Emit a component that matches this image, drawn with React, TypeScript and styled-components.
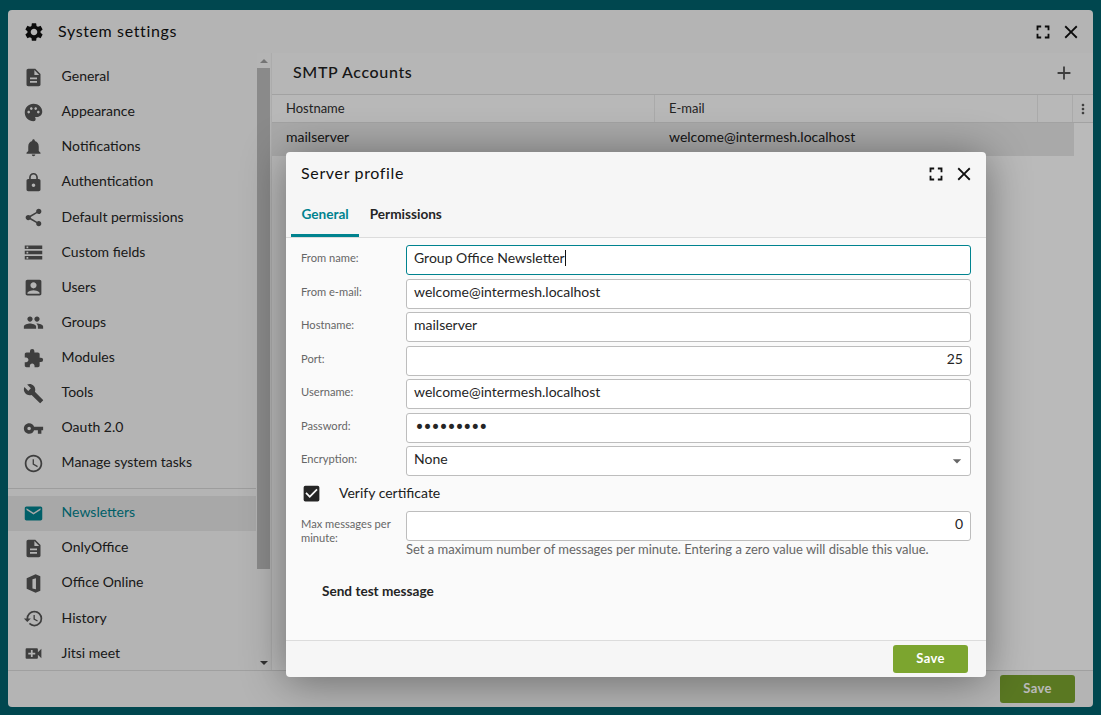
import styled, { createGlobalStyle } from "styled-components";
import {
  MdAccessTime,
  MdAccountBox,
  MdAdd,
  MdArrowDropDown,
  MdBuild,
  MdCheckBox,
  MdClose,
  MdDescription,
  MdEmail,
  MdExtension,
  MdFullscreen,
  MdHistory,
  MdLock,
  MdMoreVert,
  MdNotifications,
  MdPalette,
  MdPeople,
  MdSettings,
  MdShare,
  MdStorage,
  MdVideoCall,
  MdVpnKey,
} from "react-icons/md";

const GlobalStyle = createGlobalStyle`
  html, body {
    margin: 0;
    height: 100%;
    background: #00626d;
    font-family: Lato, "Liberation Sans", sans-serif;
    color: #202020;
    overflow: hidden;
  }
  #root {
    height: 100%;
  }
`;

const Desktop = styled.div`
  position: relative;
  box-sizing: border-box;
  height: 715px;
  padding: 10px 8px 8px;
`;

const Window = styled.div`
  display: flex;
  flex-direction: column;
  height: 100%;
  border-radius: 4px;
  background: #f7f7f7;
  overflow: hidden;
`;

const TitleBar = styled.div`
  display: flex;
  align-items: center;
  flex: none;
  height: 43px;
  padding: 0 8px 0 15px;
`;

const Title = styled.div`
  flex: 1;
  margin: 0 0 2px 13px;
  font-size: 16px;
  letter-spacing: 0.63px;
  color: #111;
`;

const HeadButton = styled.div`
  display: flex;
  align-items: center;
  justify-content: center;
  width: 28px;
  height: 28px;
  color: #111;
`;

const Body = styled.div`
  display: flex;
  flex: 1;
  min-height: 0;
`;

const Sidebar = styled.div`
  flex: none;
  width: 248px;
  padding-top: 6px;
  overflow: hidden;
`;

const NavRow = styled.div<{ $active?: boolean }>`
  display: flex;
  align-items: center;
  box-sizing: border-box;
  height: 35.13px;
  padding: 0 0 2px 15px;
  font-size: 14px;
  color: ${(p) => (p.$active ? "#00838f" : "#252525")};
  background: ${(p) => (p.$active ? "#e6e6e6" : "transparent")};

  svg {
    flex: none;
    margin-bottom: -3px;
    color: ${(p) => (p.$active ? "#00838f" : "#555")};
  }
`;

const ModuleGroup = styled.div`
  ${NavRow} {
    padding-bottom: 3.6px;
  }
`;

const NavIcon = styled.span`
  display: flex;
  align-items: center;
  justify-content: center;
  width: 21px;
  margin-right: 17.6px;
`;

const NavDivider = styled.div`
  height: 1px;
  margin: 7.2px 0;
  background: #d8d8d8;
`;

const Scrollbar = styled.div`
  display: flex;
  flex-direction: column;
  flex: none;
  width: 13px;
  margin: 0 1px;
  background: #f8f8f8;
`;

const ScrollArrow = styled.div<{ $down?: boolean }>`
  flex: none;
  width: 0;
  height: 0;
  margin: 6px auto 5px;
  border-left: 4px solid transparent;
  border-right: 4px solid transparent;
  border-${(p) => (p.$down ? "top" : "bottom")}: 4px solid ${(p) => (p.$down ? "#444" : "#a0a0a0")};
`;

const ScrollThumb = styled.div`
  flex: none;
  height: 501px;
  background: #bdbdbd;
`;

const ScrollRest = styled.div`
  flex: 1;
  display: flex;
  align-items: flex-end;
`;

const Panel = styled.div`
  flex: 1;
  min-width: 0;
  background: #ffffff;
  border-left: 1px solid #ececec;
`;

const PanelBar = styled.div`
  display: flex;
  align-items: center;
  justify-content: space-between;
  box-sizing: border-box;
  height: 42px;
  padding: 0 18px 4px 21px;
  background: #fafafa;
  border-bottom: 1px solid #dedede;
  font-size: 16px;
  font-weight: 500;
  letter-spacing: 0.63px;

  svg {
    margin-bottom: -2px;
    color: #555;
  }
`;

const HeadRow = styled.div`
  display: grid;
  grid-template-columns: 383px 383px 35px 1fr;
  box-sizing: border-box;
  height: 28px;
  background: #fdfdfd;
  border-bottom: 1px solid #dedede;
  font-size: 13px;
`;

const HeadCell = styled.div`
  display: flex;
  align-items: center;
  padding: 0 0 2px 14px;
  border-right: 1px solid #eaeaea;
  color: #303030;

  &:last-child {
    justify-content: center;
    padding: 0;
    border: 0;
    color: #555;
  }
`;

const DataRow = styled.div`
  display: grid;
  grid-template-columns: 383px 1fr;
  width: 802px;
  height: 33px;
  background: #e8e8e8;
  font-size: 14px;
`;

const DataCell = styled.div`
  display: flex;
  align-items: center;
  padding: 0 0 6px 14px;
`;

const Footer = styled.div`
  display: flex;
  justify-content: flex-end;
  align-items: center;
  flex: none;
  box-sizing: border-box;
  height: 37px;
  padding: 0 18px 0 0;
  border-top: 1px solid #dcdcdc;
`;

const SaveButton = styled.div`
  display: flex;
  align-items: center;
  justify-content: center;
  box-sizing: border-box;
  width: 75px;
  height: 28px;
  padding-bottom: 3px;
  border-radius: 3px;
  background: #7ca52f;
  color: #fff;
  font-size: 13px;
  font-weight: 700;
  letter-spacing: 0.3px;
`;

const Dim = styled.div`
  position: absolute;
  inset: 0;
  background: rgba(0, 0, 0, 0.27);
`;

const Dialog = styled.div`
  position: absolute;
  left: 286px;
  top: 152px;
  display: flex;
  flex-direction: column;
  width: 700px;
  height: 525px;
  border-radius: 4px;
  background: #f6f6f6;
  box-shadow: 0 4px 44px rgba(0, 0, 0, 0.42);
  overflow: hidden;
`;

const DialogHead = styled.div`
  display: flex;
  align-items: center;
  flex: none;
  height: 43px;
  padding: 0 8px 0 15px;
`;

const DialogTitle = styled.div`
  flex: 1;
  margin-bottom: 2px;
  font-size: 16px;
  letter-spacing: 0.65px;
  color: #111;
`;

const Tabs = styled.div`
  display: flex;
  flex: none;
  box-sizing: border-box;
  height: 43px;
  padding-left: 5px;
  border-bottom: 1px solid #dcdcdc;
`;

const Tab = styled.div<{ $active?: boolean }>`
  display: flex;
  align-items: center;
  padding: 0 10.5px 1px;
  font-size: 13.6px;
  font-weight: 700;
  color: ${(p) => (p.$active ? "#00838f" : "#252525")};
  border-bottom: 3px solid ${(p) => (p.$active ? "#00838f" : "transparent")};
`;

const Form = styled.div`
  display: flex;
  flex-direction: column;
  flex: 1;
  min-height: 0;
  padding: 7px 15px 0;
  background: #fafafa;
`;

const FieldRow = styled.div`
  display: flex;
  align-items: center;
  height: 33.5px;
  flex: none;
`;

const FieldLabel = styled.div`
  flex: none;
  width: 105px;
  padding-bottom: 7px;
  font-size: 11.15px;
  line-height: 14px;
  color: #666;
`;

const FieldBox = styled.div<{ $focus?: boolean; $right?: boolean }>`
  display: flex;
  align-items: center;
  justify-content: ${(p) => (p.$right ? "flex-end" : "flex-start")};
  flex: 1;
  box-sizing: border-box;
  height: 30px;
  margin-bottom: 3.5px;
  padding: 0 7px 5px;
  border: 1px solid ${(p) => (p.$focus ? "#00838f" : "#bdbdbd")};
  border-radius: 3px;
  background: #fff;
  font-size: 14px;
  color: #252525;
`;

const Caret = styled.span`
  width: 1px;
  height: 16px;
  background: #111;
`;

const Dots = styled.span`
  margin: 3px 0 0 0.5px;
  font-size: 17px;
  letter-spacing: -2.05px;
  font-family: "DejaVu Sans", sans-serif;
`;

const SelectValue = styled.span`
  flex: 1;
`;

const SelectArrow = styled.span`
  display: flex;
  margin: 0 -4px -5px 0;
  color: #666;
`;

const CheckRow = styled.div`
  display: flex;
  align-items: center;
  flex: none;
  box-sizing: border-box;
  height: 31.5px;
  padding-bottom: 5px;
  font-size: 14px;

  svg {
    flex: none;
    margin: 1px 17px 0 0;
    color: #252525;
  }
`;

const MaxRow = styled.div`
  display: flex;
  flex: none;
  height: 30px;
`;

const MaxLabel = styled(FieldLabel)`
  padding: 6px 0 0;
`;

const Hint = styled.div`
  flex: none;
  margin-left: 105px;
  font-size: 13px;
  line-height: 16px;
  color: #666;
`;

const TestButton = styled.div`
  flex: none;
  margin: 26px 0 0 21px;
  font-size: 13.6px;
  font-weight: 700;
  color: #252525;
`;

const DialogFooter = styled.div`
  display: flex;
  justify-content: flex-end;
  align-items: center;
  flex: none;
  box-sizing: border-box;
  height: 37px;
  padding: 0 18px 0 0;
  border-top: 1px solid #dcdcdc;
`;

const OfficeIcon = () => (
  <svg width="21" height="21" viewBox="0 0 24 24" fill="currentColor">
    <path
      fillRule="evenodd"
      d="M4.2 6 14.4 1.4 19.8 3.6v16.8L14.4 22.6 4.2 18ZM10.8 7.2 14.8 6v12.6l-4-1Z"
    />
  </svg>
);

const topNav = [
  { icon: <MdDescription size={21} />, label: "General" },
  { icon: <MdPalette size={21} />, label: "Appearance" },
  { icon: <MdNotifications size={21} />, label: "Notifications" },
  { icon: <MdLock size={21} />, label: "Authentication" },
  { icon: <MdShare size={21} />, label: "Default permissions" },
  { icon: <MdStorage size={21} />, label: "Custom fields" },
  { icon: <MdAccountBox size={21} />, label: "Users" },
  { icon: <MdPeople size={21} />, label: "Groups" },
  { icon: <MdExtension size={21} />, label: "Modules" },
  { icon: <MdBuild size={21} />, label: "Tools" },
  { icon: <MdVpnKey size={21} />, label: "Oauth 2.0" },
  { icon: <MdAccessTime size={21} />, label: "Manage system tasks" },
];

const moduleNav = [
  { icon: <MdEmail size={21} />, label: "Newsletters", active: true },
  { icon: <MdDescription size={21} />, label: "OnlyOffice" },
  { icon: <OfficeIcon />, label: "Office Online" },
  { icon: <MdHistory size={21} />, label: "History" },
  { icon: <MdVideoCall size={21} />, label: "Jitsi meet" },
];

const fields = [
  { label: "From e-mail:", value: "welcome@intermesh.localhost" },
  { label: "Hostname:", value: "mailserver" },
  { label: "Port:", value: "25", right: true },
  { label: "Username:", value: "welcome@intermesh.localhost" },
];

export default function App() {
  return (
    <Desktop>
      <GlobalStyle />
      <Window>
        <TitleBar>
          <MdSettings size={22} color="#111" />
          <Title>System settings</Title>
          <HeadButton>
            <MdFullscreen size={22} />
          </HeadButton>
          <HeadButton>
            <MdClose size={22} />
          </HeadButton>
        </TitleBar>
        <Body>
          <Sidebar>
            {topNav.map((item) => (
              <NavRow key={item.label}>
                <NavIcon>{item.icon}</NavIcon>
                {item.label}
              </NavRow>
            ))}
            <NavDivider />
            <ModuleGroup>
              {moduleNav.map((item) => (
                <NavRow key={item.label} $active={item.active}>
                  <NavIcon>{item.icon}</NavIcon>
                  {item.label}
                </NavRow>
              ))}
            </ModuleGroup>
          </Sidebar>
          <Scrollbar>
            <ScrollArrow />
            <ScrollThumb />
            <ScrollRest>
              <ScrollArrow $down />
            </ScrollRest>
          </Scrollbar>
          <Panel>
            <PanelBar>
              SMTP Accounts
              <MdAdd size={22} />
            </PanelBar>
            <HeadRow>
              <HeadCell>Hostname</HeadCell>
              <HeadCell>E-mail</HeadCell>
              <HeadCell />
              <HeadCell>
                <MdMoreVert size={16} />
              </HeadCell>
            </HeadRow>
            <DataRow>
              <DataCell>mailserver</DataCell>
              <DataCell>welcome@intermesh.localhost</DataCell>
            </DataRow>
          </Panel>
        </Body>
        <Footer>
          <SaveButton>Save</SaveButton>
        </Footer>
      </Window>
      <Dim />
      <Dialog>
        <DialogHead>
          <DialogTitle>Server profile</DialogTitle>
          <HeadButton>
            <MdFullscreen size={22} />
          </HeadButton>
          <HeadButton>
            <MdClose size={22} />
          </HeadButton>
        </DialogHead>
        <Tabs>
          <Tab $active>General</Tab>
          <Tab>Permissions</Tab>
        </Tabs>
        <Form>
          <FieldRow>
            <FieldLabel>From name:</FieldLabel>
            <FieldBox $focus>
              Group Office Newsletter
              <Caret />
            </FieldBox>
          </FieldRow>
          {fields.map((f) => (
            <FieldRow key={f.label}>
              <FieldLabel>{f.label}</FieldLabel>
              <FieldBox $right={f.right}>{f.value}</FieldBox>
            </FieldRow>
          ))}
          <FieldRow>
            <FieldLabel>Password:</FieldLabel>
            <FieldBox>
              <Dots>•••••••••</Dots>
            </FieldBox>
          </FieldRow>
          <FieldRow>
            <FieldLabel>Encryption:</FieldLabel>
            <FieldBox>
              <SelectValue>None</SelectValue>
              <SelectArrow>
                <MdArrowDropDown size={20} />
              </SelectArrow>
            </FieldBox>
          </FieldRow>
          <CheckRow>
            <MdCheckBox size={21} />
            Verify certificate
          </CheckRow>
          <MaxRow>
            <MaxLabel>Max messages per minute:</MaxLabel>
            <FieldBox $right>0</FieldBox>
          </MaxRow>
          <Hint>
            Set a maximum number of messages per minute. Entering a zero value
            will disable this value.
          </Hint>
          <TestButton>Send test message</TestButton>
        </Form>
        <DialogFooter>
          <SaveButton>Save</SaveButton>
        </DialogFooter>
      </Dialog>
    </Desktop>
  );
}
